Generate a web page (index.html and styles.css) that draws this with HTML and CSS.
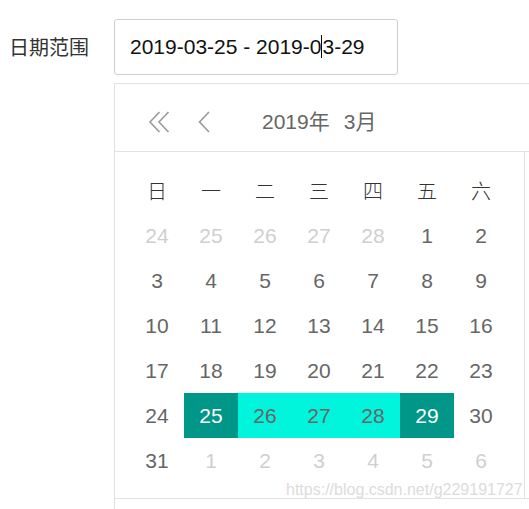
FILE: index.html
```html
<!DOCTYPE html>
<html lang="zh-CN">
<head>
<meta charset="utf-8">
<title>日期范围</title>
<link rel="stylesheet" href="styles.css">
</head>
<body>
<div class="page">
<div class="form-row">
  <label class="form-label">日期范围</label>
  <div class="input">2019-03-25 - 2019-0<span class="caret"></span>3-29</div>
</div>
<div class="laydate">
  <div class="ld-header">
    <span class="ld-nav ld-prev-year">
      <svg width="26" height="24" viewBox="0 0 26 24"><path d="M12.5 2 L3 12 L12.5 22 M21.5 2 L12 12 L21.5 22" fill="none" stroke="#9a9a9a" stroke-width="1.6"/></svg>
    </span>
    <span class="ld-nav ld-prev-month">
      <svg width="14" height="24" viewBox="0 0 14 24"><path d="M12 2 L2.5 12 L12 22" fill="none" stroke="#9a9a9a" stroke-width="1.6"/></svg>
    </span>
    <span class="ld-ym"><span>2019年</span><span>3月</span></span>
  </div>
  <div class="ld-body">
    <div class="ld-main">
      <div class="ld-grid">
        <span class="wk">日</span><span class="wk">一</span><span class="wk">二</span><span class="wk">三</span><span class="wk">四</span><span class="wk">五</span><span class="wk">六</span>
        <span class="d off">24</span><span class="d off">25</span><span class="d off">26</span><span class="d off">27</span><span class="d off">28</span><span class="d">1</span><span class="d">2</span>
        <span class="d">3</span><span class="d">4</span><span class="d">5</span><span class="d">6</span><span class="d">7</span><span class="d">8</span><span class="d">9</span>
        <span class="d">10</span><span class="d">11</span><span class="d">12</span><span class="d">13</span><span class="d">14</span><span class="d">15</span><span class="d">16</span>
        <span class="d">17</span><span class="d">18</span><span class="d">19</span><span class="d">20</span><span class="d">21</span><span class="d">22</span><span class="d">23</span>
        <span class="d">24</span><span class="d sel">25</span><span class="d range">26</span><span class="d range">27</span><span class="d range">28</span><span class="d sel">29</span><span class="d">30</span>
        <span class="d">31</span><span class="d off">1</span><span class="d off">2</span><span class="d off">3</span><span class="d off">4</span><span class="d off">5</span><span class="d off">6</span>
      </div>
    </div>
    <div class="ld-main ld-second"></div>
  </div>
  <div class="ld-footer"></div>
  <div class="watermark">https://blog.csdn.net/g229191727</div>
</div>
</div>
</body>
</html>
```

FILE: styles.css
```css
html {
  height: 100%;
  overflow: hidden;
}
body {
  margin: 0;
  height: 100%;
  font-family: "Liberation Sans", Arial, "Noto Sans CJK SC", sans-serif;
  background: #fff;
}
.page {
  padding: 19px 0 0 8px;
  height: 100%;
  box-sizing: border-box;
  overflow: hidden;
}
.form-row {
  display: flex;
  align-items: center;
}
.form-label {
  width: 106px;
  padding-left: 1px;
  box-sizing: border-box;
  font-size: 20px;
  color: #333;
  font-family: "Noto Sans CJK SC", sans-serif;
  line-height: 24px;
  margin-top: -1px;
}
.input {
  width: 284px;
  height: 56px;
  box-sizing: border-box;
  border: 1px solid #cfcfcf;
  border-radius: 3px;
  padding-left: 15px;
  font-size: 21px;
  line-height: 54px;
  color: #111;
  white-space: nowrap;
}
.caret {
  display: inline-block;
  width: 0;
  height: 23px;
  border-left: 1px solid #000;
  vertical-align: middle;
  margin-top: -4px;
}
.laydate {
  position: relative;
  margin-top: 8px;
  margin-left: 106px;
  border: 1px solid #e2e2e2;
  border-right: none;
  background: #fff;
  overflow: hidden;
}
.ld-header {
  height: 68px;
  border-bottom: 1px solid #e2e2e2;
  display: flex;
  align-items: center;
  padding: 8px 0 0 32px;
  box-sizing: border-box;
}
.ld-nav {
  display: flex;
  align-items: center;
}
.ld-prev-year { margin-right: 24px; }
.ld-prev-month { margin-right: 51px; }
.ld-ym {
  display: flex;
  gap: 14px;
  font-size: 21px;
  color: #666;
  font-family: "Liberation Sans", "Noto Sans CJK SC", sans-serif;
  line-height: 28px;
}
.ld-body {
  display: flex;
}
.ld-main {
  padding: 16px 16px 15px 15px;
  border-right: 1px solid #e2e2e2;
  flex-shrink: 0;
}
.ld-second {
  border-right: none;
  flex: 1;
  padding: 0;
}
.ld-grid {
  display: grid;
  grid-template-columns: repeat(7, 54px);
  grid-auto-rows: 45px;
}
.ld-grid span {
  display: flex;
  align-items: center;
  justify-content: center;
  font-size: 21px;
  color: #666;
}
.ld-grid .wk {
  color: #333;
  font-family: "Noto Sans CJK SC", sans-serif;
  font-weight: 300;
  font-size: 20px;
}
.ld-grid .off {
  color: #cfcfcf;
}
.ld-grid .sel {
  background: #009688;
  color: #fff;
}
.ld-grid .range {
  background: #00f5dc;
  color: #666;
}
.ld-footer {
  height: 10px;
  border-top: 1px solid #e2e2e2;
}
.watermark {
  position: absolute;
  left: 171px;
  top: 397px;
  font-size: 16px;
  line-height: 18px;
  color: #dcdcdc;
  white-space: nowrap;
}
```
